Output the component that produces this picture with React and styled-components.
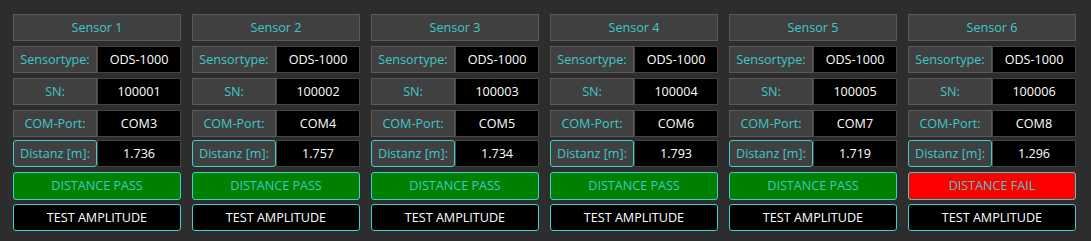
import React from 'react';
import styled, { createGlobalStyle } from 'styled-components';

const sensors = [
	{ id: 1, type: 'ODS-1000', sn: '100001', port: 'COM3', dist: '1.736', pass: true },
	{ id: 2, type: 'ODS-1000', sn: '100002', port: 'COM4', dist: '1.757', pass: true },
	{ id: 3, type: 'ODS-1000', sn: '100003', port: 'COM5', dist: '1.734', pass: true },
	{ id: 4, type: 'ODS-1000', sn: '100004', port: 'COM6', dist: '1.793', pass: true },
	{ id: 5, type: 'ODS-1000', sn: '100005', port: 'COM7', dist: '1.719', pass: true },
	{ id: 6, type: 'ODS-1000', sn: '100006', port: 'COM8', dist: '1.296', pass: false },
];

function SensorColumn({ s }) {
	return (
		<Column>
			<Header>Sensor {s.id}</Header>
			<Row>
				<Label>Sensortype:</Label>
				<Value>{s.type}</Value>
			</Row>
			<Row>
				<Label>SN:</Label>
				<Value>{s.sn}</Value>
			</Row>
			<Row>
				<Label>COM-Port:</Label>
				<Value>{s.port}</Value>
			</Row>
			<Row $top={3}>
				<Label $focus>Distanz [m]:</Label>
				<Value>{s.dist}</Value>
			</Row>
			<Result $pass={s.pass}>{s.pass ? 'DISTANCE PASS' : 'DISTANCE FAIL'}</Result>
			<TestBtn>TEST AMPLITUDE</TestBtn>
		</Column>
	);
}

export default function App() {
	return (
		<>
			<GlobalStyle />
			<Page>
				{sensors.map((s) => (
					<SensorColumn key={s.id} s={s} />
				))}
			</Page>
		</>
	);
}

const GlobalStyle = createGlobalStyle`
	html, body {
		margin: 0;
		padding: 0;
		background: #2d2d2d;
	}
	body {
		font-family: "Open Sans", "Noto Sans", sans-serif;
		font-size: 12.6px;
	}
`;

const Page = styled.div`
	width: 1091px;
	height: 241px;
	box-sizing: border-box;
	padding: 14px 0 0 13px;
	display: flex;
	gap: 11px;
	background: #2d2d2d;
`;

const Column = styled.div`
	width: 168px;
	display: flex;
	flex-direction: column;
`;

const Cell = styled.div`
	height: 27px;
	box-sizing: border-box;
	padding-top: 1px;
	display: flex;
	align-items: center;
	justify-content: center;
	white-space: nowrap;
	line-height: 1;
`;

const Header = styled(Cell)`
	background: #404040;
	border: 1px solid #5a5a5a;
	color: #3fc9c9;
`;

const Row = styled.div`
	margin-top: ${(p) => p.$top ?? 5}px;
	display: flex;
`;

const Label = styled(Cell)`
	width: 84px;
	background: #404040;
	border: 1px solid ${(p) => (p.$focus ? '#3cd0d0' : '#5a5a5a')};
	border-radius: ${(p) => (p.$focus ? '3px' : '0')};
	color: #3fc9c9;
`;

const Value = styled(Cell)`
	width: 84px;
	background: #000;
	border: 1px solid #444;
	color: #fff;
`;

const Result = styled(Cell)`
	margin-top: 5px;
	height: 28px;
	background: ${(p) => (p.$pass ? '#008000' : '#ff0000')};
	border: 1px solid #3cd0d0;
	border-radius: 3px;
	color: #3fc9c9;
`;

const TestBtn = styled(Cell)`
	margin-top: 4px;
	background: #000;
	border: 1px solid #3cd0d0;
	border-radius: 3px;
	color: #fff;
`;
